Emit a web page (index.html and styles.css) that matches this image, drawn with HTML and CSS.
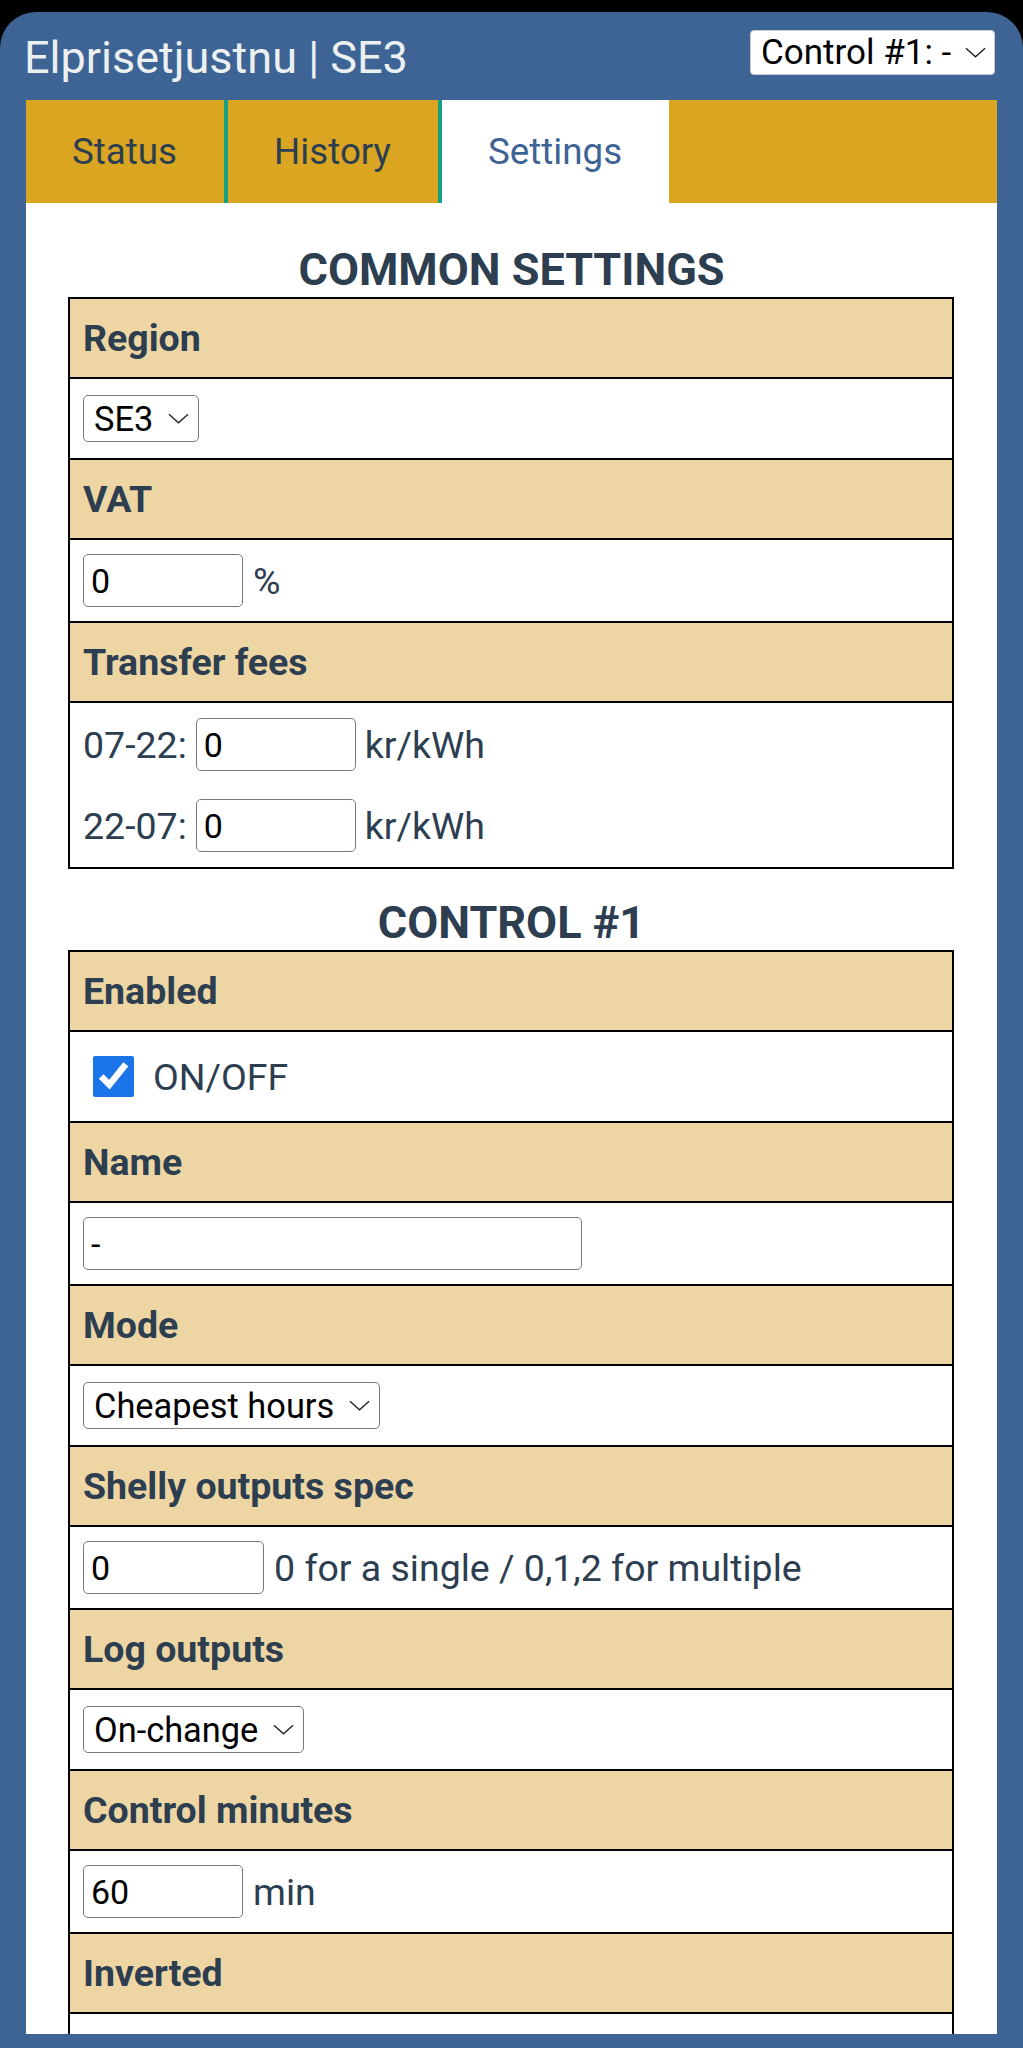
FILE: index.html
```html
<!DOCTYPE html>
<html lang="sv">
<head>
<meta charset="utf-8">
<title>Elprisetjustnu | SE3</title>
<link rel="stylesheet" href="styles.css">
</head>
<body>
<div class="frame">
  <header class="topbar">
    <h1 class="title">Elprisetjustnu | SE3</h1>
    <span class="sel sel-top">
      <select><option>Control #1: -</option></select>
      <svg class="chev" viewBox="0 0 22 11" width="21" height="11"><path d="M1 1 L11 10 L21 1" fill="none" stroke="#222" stroke-width="1.5"/></svg>
    </span>
  </header>
  <nav class="tabs">
    <div class="tab">Status</div>
    <div class="tab">History</div>
    <div class="tab active">Settings</div>
  </nav>
  <main class="card">
    <h2 class="heading first">COMMON SETTINGS</h2>
    <section class="sect">
      <div class="row head">Region</div>
      <div class="row val sel-row">
        <span class="sel">
          <select><option>SE3</option></select>
          <svg class="chev" viewBox="0 0 22 11" width="21" height="11"><path d="M1 1 L11 10 L21 1" fill="none" stroke="#222" stroke-width="1.4"/></svg>
        </span>
      </div>
      <div class="row head">VAT</div>
      <div class="row val">
        <input class="inp w160" type="text" value="0"><span>%</span>
      </div>
      <div class="row head">Transfer fees</div>
      <div class="row val fees">
        <div class="line"><span>07-22:</span><input class="inp w160" type="text" value="0"><span>kr/kWh</span></div>
        <div class="line"><span>22-07:</span><input class="inp w160" type="text" value="0"><span>kr/kWh</span></div>
      </div>
    </section>

    <h2 class="heading">CONTROL #1</h2>
    <section class="sect">
      <div class="row head">Enabled</div>
      <div class="row val check-row">
        <label class="check"><input type="checkbox" checked><span>ON/OFF</span></label>
      </div>
      <div class="row head">Name</div>
      <div class="row val">
        <input class="inp w499" type="text" value="-">
      </div>
      <div class="row head">Mode</div>
      <div class="row val sel-row">
        <span class="sel">
          <select><option>Cheapest hours</option></select>
          <svg class="chev" viewBox="0 0 22 11" width="21" height="11"><path d="M1 1 L11 10 L21 1" fill="none" stroke="#222" stroke-width="1.4"/></svg>
        </span>
      </div>
      <div class="row head">Shelly outputs spec</div>
      <div class="row val">
        <input class="inp w181" type="text" value="0"><span>0 for a single / 0,1,2 for multiple</span>
      </div>
      <div class="row head">Log outputs</div>
      <div class="row val sel-row">
        <span class="sel">
          <select><option>On-change</option></select>
          <svg class="chev" viewBox="0 0 22 11" width="21" height="11"><path d="M1 1 L11 10 L21 1" fill="none" stroke="#222" stroke-width="1.4"/></svg>
        </span>
      </div>
      <div class="row head">Control minutes</div>
      <div class="row val">
        <input class="inp w160" type="text" value="60"><span>min</span>
      </div>
      <div class="row head">Inverted</div>
      <div class="row val check-row"></div>
    </section>
  </main>
</div>
</body>
</html>
```

FILE: styles.css
```css
html, body {
  margin: 0;
  padding: 0;
}
body {
  background: #000;
  font-family: Roboto, "Noto Sans", sans-serif;
  height: 2048px;
  overflow: hidden;
}
.frame {
  margin-top: 12px;
  height: 2036px;
  background: #3d6494;
  border-radius: 36px 36px 0 0;
  padding: 0 26px 14px;
  box-sizing: border-box;
  display: flex;
  flex-direction: column;
}
.topbar {
  height: 88px;
  display: flex;
  align-items: flex-start;
  justify-content: space-between;
  flex: none;
}
.title {
  margin: 20px 0 0 -2px;
  font-size: 45px;
  line-height: 52px;
  font-weight: 400;
  color: #ecf0f1;
}
.sel {
  display: inline-flex;
  align-items: center;
  gap: 14px;
  height: 47px;
  box-sizing: border-box;
  padding: 0 9px 0 10px;
  border: 1.5px solid #7a7a7a;
  border-radius: 5px;
  background: #fff;
}
.sel select {
  appearance: none;
  -webkit-appearance: none;
  border: none;
  background: transparent;
  margin: 0;
  padding: 0;
  font-family: Roboto, sans-serif;
  font-size: 34.4px;
  color: #000;
  outline: none;
}
.chev {
  flex: none;
}
.sel-top {
  margin-top: 18px;
  margin-right: 2px;
  height: 45px;
  border: 1px solid #c9cdd3;
  border-radius: 4px;
  padding: 0 8px 0 10px;
  gap: 13px;
}
.sel-top select {
  font-size: 35px;
}
.tabs {
  flex: none;
  height: 103px;
  display: flex;
  background: #daa520;
}
.tab {
  display: flex;
  align-items: center;
  padding: 0 47px 0 46px;
  font-size: 36.75px;
  color: #2c3e50;
}
.tab + .tab {
  border-left: 4px solid #16a085;
}
.tab.active {
  background: #fff;
  color: #3d6494;
}
.card {
  flex: 1;
  background: #fff;
  overflow: hidden;
  padding-top: 42px;
  min-height: 0;
}
.heading {
  margin: 29px 0 2px;
  text-align: center;
  font-size: 45px;
  line-height: 50px;
  font-weight: 700;
  color: #2c3e50;
}
.heading.first {
  margin-top: 0;
}
.sect {
  margin: 0 43px 0 42px;
  border: 2px solid #000;
}
.row {
  box-sizing: border-box;
  border-bottom: 2px solid #000;
  display: flex;
  align-items: center;
  padding: 0 13px;
  font-size: 37.5px;
  color: #2c3e50;
}
.row:last-child {
  border-bottom: none;
}
.head {
  height: 80px;
  background: #eed6a4;
  font-weight: 700;
}
.val {
  height: 83px;
  background: #fff;
  gap: 10px;
}
.sel-row {
  height: 81px;
}
.check-row {
  height: 91px;
}
.fees {
  height: 164px;
  flex-direction: column;
  align-items: flex-start;
  justify-content: center;
  gap: 28px;
}
.line {
  display: flex;
  align-items: center;
  gap: 9px;
}
.inp {
  height: 53px;
  box-sizing: border-box;
  border: 1.5px solid #7a7a7a;
  border-radius: 5px;
  padding: 0 7px;
  font-family: Roboto, sans-serif;
  font-size: 34px;
  color: #000;
  background: #fff;
  margin: 0;
}
.w160 { width: 160px; }
.w181 { width: 181px; }
.w499 { width: 499px; }
.check {
  display: flex;
  align-items: center;
  gap: 19px;
  margin-left: 10px;
}
.check input {
  width: 41px;
  height: 41px;
  margin: 0;
  accent-color: #1b74e8;
}
```
